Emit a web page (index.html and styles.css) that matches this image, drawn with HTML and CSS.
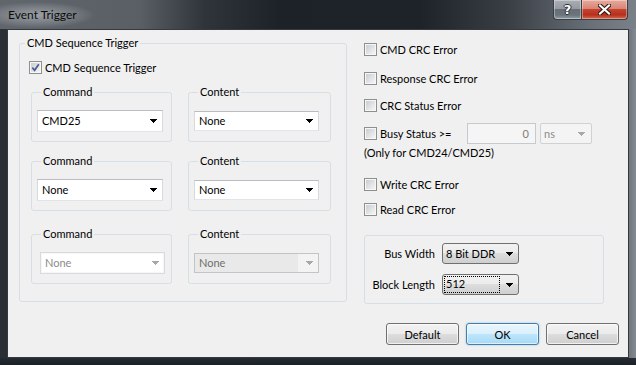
FILE: index.html
```html
<!DOCTYPE html>
<html>
<head>
<meta charset="utf-8">
<title>Event Trigger</title>
<link rel="stylesheet" href="styles.css">
</head>
<body>
<div class="window">
  <div class="titlebar">
    <span class="title">Event Trigger</span>
    <div class="caption-btns">
      <span class="cap-btn help">?</span>
      <span class="cap-btn close">
        <svg width="13" height="11" viewBox="0 0 13 11"><path d="M2 1.5L11 9.5M11 1.5L2 9.5" stroke="#2a1612" stroke-width="4.2" stroke-linecap="square" fill="none"/><path d="M2 1.5L11 9.5M11 1.5L2 9.5" stroke="#fff" stroke-width="2.2" stroke-linecap="square" fill="none"/></svg>
      </span>
    </div>
  </div>
  <div class="client">
    <fieldset class="group main">
      <legend>CMD Sequence Trigger</legend>
      <label class="check seq"><span class="box"><svg width="9" height="9" viewBox="0 0 9 9"><path d="M1.3 4.6L3.6 7.3L7.8 1.2" stroke="#4a5c8c" stroke-width="1.7" fill="none"/></svg></span>CMD Sequence Trigger</label>
      <div class="pairs">
        <fieldset class="sub"><legend>Command</legend>
          <div class="combo edit cmd"><span class="val">CMD25</span><svg class="arrow" width="7" height="4" viewBox="0 0 7 4"><path d="M0 0H7V1H6V2H5V3H4V4H3V3H2V2H1V1H0Z"/></svg></div>
        </fieldset>
        <fieldset class="sub"><legend>Content</legend>
          <div class="combo edit cnt"><span class="val">None</span><svg class="arrow" width="7" height="4" viewBox="0 0 7 4"><path d="M0 0H7V1H6V2H5V3H4V4H3V3H2V2H1V1H0Z"/></svg></div>
        </fieldset>
        <fieldset class="sub"><legend>Command</legend>
          <div class="combo edit cmd"><span class="val">None</span><svg class="arrow" width="7" height="4" viewBox="0 0 7 4"><path d="M0 0H7V1H6V2H5V3H4V4H3V3H2V2H1V1H0Z"/></svg></div>
        </fieldset>
        <fieldset class="sub"><legend>Content</legend>
          <div class="combo edit cnt"><span class="val">None</span><svg class="arrow" width="7" height="4" viewBox="0 0 7 4"><path d="M0 0H7V1H6V2H5V3H4V4H3V3H2V2H1V1H0Z"/></svg></div>
        </fieldset>
        <fieldset class="sub last"><legend>Command</legend>
          <div class="combo edit cmd off shift"><span class="val">None</span><svg class="arrow" width="7" height="4" viewBox="0 0 7 4"><path d="M0 0H7V1H6V2H5V3H4V4H3V3H2V2H1V1H0Z"/></svg></div>
        </fieldset>
        <fieldset class="sub last"><legend>Content</legend>
          <div class="combo edit cnt off2"><span class="val">None</span><svg class="arrow" width="7" height="4" viewBox="0 0 7 4"><path d="M0 0H7V1H6V2H5V3H4V4H3V3H2V2H1V1H0Z"/></svg></div>
        </fieldset>
      </div>
    </fieldset>

    <div class="right">
      <label class="check r1"><span class="box"></span>CMD CRC Error</label>
      <label class="check r2"><span class="box"></span>Response CRC Error</label>
      <label class="check r3"><span class="box"></span>CRC Status Error</label>
      <div class="busy">
        <label class="check"><span class="box"></span><span class="busy-text">Busy Status &gt;=</span></label>
        <span class="num">0</span>
        <div class="combo unit"><span class="val">ns</span><svg class="arrow" width="7" height="4" viewBox="0 0 7 4"><path d="M0 0H7V1H6V2H5V3H4V4H3V3H2V2H1V1H0Z"/></svg></div>
      </div>
      <div class="note">(Only for CMD24/CMD25)</div>
      <label class="check r5"><span class="box"></span>Write CRC Error</label>
      <label class="check r6"><span class="box"></span>Read CRC Error</label>
      <div class="bus-group">
        <span class="lbl">Bus Width</span>
        <div class="combo btn"><span class="val">8 Bit DDR</span><svg class="arrow" width="7" height="4" viewBox="0 0 7 4"><path d="M0 0H7V1H6V2H5V3H4V4H3V3H2V2H1V1H0Z"/></svg></div>
        <span class="lbl">Block Length</span>
        <div class="combo btn"><span class="val focus">512</span><svg class="arrow" width="7" height="4" viewBox="0 0 7 4"><path d="M0 0H7V1H6V2H5V3H4V4H3V3H2V2H1V1H0Z"/></svg></div>
      </div>
    </div>

    <div class="buttons">
      <button class="pb">Default</button>
      <button class="pb default">OK</button>
      <button class="pb">Cancel</button>
    </div>
  </div>
</div>
</body>
</html>
```

FILE: styles.css
```css
* { box-sizing: border-box; }
html, body { margin: 0; padding: 0; }
body {
  width: 636px;
  height: 365px;
  overflow: hidden;
  font-family: Lato, "Open Sans", sans-serif;
  font-size: 11px;
  color: #000;
  background: #1e232a;
}
.window {
  height: 365px;
  display: flex;
  flex-direction: column;
  padding: 0 7px 7px;
  background:
    linear-gradient(to top, #1b2027 0, #252b32 7px, transparent 7px),
    linear-gradient(to left, #858b92 0, #70767d 7px, transparent 7px),
    linear-gradient(to right, #2a2f36 0%, #1c2128 30%, #1d2229 70%, #3a4047 100%);
}
.titlebar {
  height: 29px;
  flex: none;
  display: flex;
  align-items: flex-start;
  margin: 0 -7px;
  padding: 0 8px;
  background:
    radial-gradient(ellipse 58px 13px at 37px 15px, rgba(175,180,186,0.75), rgba(160,165,171,0.3) 70%, rgba(160,165,171,0) 100%),
    linear-gradient(to right, #61666d 0%, #5a5f66 22%, #30353c 32%, #1d2229 44%, #1e232a 66%, #3a3f46 80%, #6a7077 93%, #7b8188 100%);
}
.title {
  margin-top: 8px;
  line-height: 14px;
  font-size: 12px;
  color: #0c0c0c;
}
.caption-btns {
  margin-left: auto;
  display: flex;
}
.cap-btn {
  height: 20px;
  display: flex;
  align-items: center;
  justify-content: center;
  border: 1px solid #3a3f45;
  border-top: none;
  box-shadow: inset 0 0 0 1px rgba(255,255,255,0.35);
}
.help {
  width: 28px;
  border-radius: 0 0 0 4px;
  border-right: none;
  background: linear-gradient(#a9aeb4 0%, #959ba1 45%, #676e75 50%, #6c747b 80%, #8fa3a8 100%);
  font-family: "DejaVu Sans", sans-serif;
  font-weight: bold;
  font-size: 13px;
  color: #fff;
  text-shadow: 1px 0 0 #2b3036, -1px 0 0 #2b3036, 0 1px 0 #2b3036, 0 -1px 0 #2b3036;
}
.close {
  width: 47px;
  border-radius: 0 0 4px 0;
  background: linear-gradient(#e6ab9f 0%, #d88575 45%, #c5432f 50%, #b6301c 78%, #d56a4e 100%);
}

.client {
  flex: 1;
  background: #f0f0f0;
  border: 1px solid #353a40;
  display: grid;
  grid-template-columns: 328px 1fr;
  column-gap: 17px;
  align-content: start;
  align-items: start;
  padding-left: 11px;
}

fieldset {
  margin: 0;
  padding: 0;
  min-width: 0;
  border: 1px solid #d5dfe5;
  border-radius: 3px;
}
legend {
  padding: 0 2px;
  line-height: 14px;
}
.main {
  margin-top: 6px;
  padding-bottom: 17px;
}
.main > legend { margin-left: 5px; }

.check {
  display: flex;
  align-items: center;
  height: 13px;
  white-space: nowrap;
}
.box {
  width: 13px;
  height: 13px;
  flex: none;
  margin-right: 3px;
  border: 1px solid #8e8f8f;
  padding: 1px;
  background: linear-gradient(135deg, #c9cdd2, #f5f5f5) content-box, #f7f7f7;
  display: flex;
  align-items: center;
  justify-content: center;
}
.seq { margin: 11px 0 0 9px; }

.pairs {
  margin: 11px 0 0 11px;
  display: grid;
  grid-template-columns: 141px 143px;
  column-gap: 16px;
  row-gap: 12px;
}
.sub {
  padding: 0 0 9px 5px;
}
.sub > legend { margin-left: 4px; }
.sub.last { margin-top: 4px; }

.combo {
  display: flex;
  align-items: center;
  justify-content: space-between;
  background: #fff;
}
.combo .val { padding-left: 4px; line-height: 14px; }
.combo .arrow { flex: none; fill: #000; }
.edit {
  border: 1px solid;
  border-color: #b9bcc2 #d6d9de #e0e5ea #d6d9de;
  padding-right: 5px;
}
.cmd { width: 126px; height: 22px; margin-top: 11px; }
.cnt { width: 125px; height: 20px; margin-top: 12px; }
.shift { margin-left: 3px; width: 125px; }
.off { border-color: #dadada; color: #8b8b8b; box-shadow: inset 0 0 0 1px #f6f6f6; }
.off .arrow { fill: #a7a7a7; }
.off2 { border-color: #c4c4c4; background: linear-gradient(to right, #e9e9e9 0, #e9e9e9 calc(100% - 20px), #f3f3f3 calc(100% - 20px)); color: #6f6f6f; }
.off2 .arrow { fill: #a7a7a7; }

.right {
  padding-top: 13px;
  display: flex;
  flex-direction: column;
  align-items: flex-start;
}
.r2 { margin-top: 16px; }
.r3 { margin-top: 14px; }
.busy {
  margin-top: 11px;
  height: 21px;
  display: flex;
  align-items: center;
}
.busy-text { width: 87px; }
.num {
  width: 69px;
  height: 21px;
  border: 1px solid #c6c9cd;
  background: #f5f5f5;
  color: #7d7d7d;
  text-align: right;
  padding-right: 6px;
  line-height: 19px;
}
.unit {
  width: 52px;
  height: 21px;
  margin-left: 4px;
  border: 1px solid #cfd1d4;
  border-radius: 2px;
  background: #f4f4f4;
  color: #8c8c8c;
  padding-right: 6px;
}
.unit .val { padding-left: 3px; }
.unit .arrow { fill: #a9a9a9; }
.note { margin-top: 1px; line-height: 15px; }
.r5 { margin-top: 18px; }
.r6 { margin-top: 12px; }

.bus-group {
  margin-top: 19px;
  width: 240px;
  height: 69px;
  border: 1px solid #d5dfe5;
  border-radius: 3px;
  display: grid;
  grid-template-columns: 70px 77px;
  column-gap: 7px;
  row-gap: 10px;
  align-items: center;
  align-content: start;
  padding-top: 7px;
}
.lbl { text-align: right; white-space: nowrap; }
.btn {
  height: 21px;
  border: 1px solid #707070;
  border-radius: 3px;
  background: linear-gradient(#f2f2f2 0%, #ebebeb 50%, #dddddd 50%, #cfcfcf 100%);
  padding-right: 5px;
}
.btn .val { padding-left: 3px; }
.btn .val.focus {
  margin-left: 2px;
  padding-left: 1px;
  width: 54px;
  height: 15px;
  outline: 1px dotted #000;
  outline-offset: 0;
}

.buttons {
  grid-column: 1 / -1;
  justify-self: end;
  margin-top: 19px;
  margin-right: 9px;
  display: flex;
  gap: 7px;
}
.pb {
  width: 73px;
  height: 22px;
  padding: 0;
  font: inherit;
  color: #000;
  border: 1px solid #707070;
  border-radius: 3px;
  background: linear-gradient(#f2f2f2 0%, #ebebeb 50%, #dddddd 50%, #cfcfcf 100%);
  box-shadow: inset 0 0 0 1px rgba(255,255,255,0.7);
}
.pb.default {
  border-color: #3c7fb1;
  background: linear-gradient(#eaf6fd 0%, #d9f0fc 50%, #bee6fd 50%, #a7d9f5 100%);
  box-shadow: inset 0 0 0 1px rgba(255,255,255,0.6), 0 0 2px rgba(60,127,177,0.5);
}
```
